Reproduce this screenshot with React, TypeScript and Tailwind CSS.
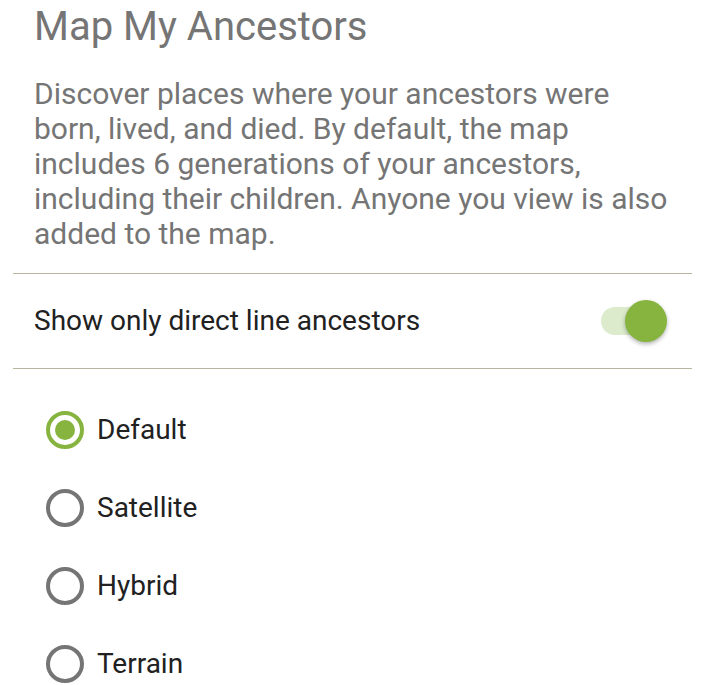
import React from "react";

function Radio({ label, checked }: { label: string; checked?: boolean }) {
  return (
    <div className="flex items-center h-[78px]">
      <div
        className={
          "ml-[46px] w-[38px] h-[38px] rounded-full border-[4px] flex items-center justify-center " +
          (checked ? "border-[#86b43f]" : "border-[#757575]")
        }
      >
        {checked && <div className="w-[20px] h-[20px] rounded-full bg-[#86b43f]" />}
      </div>
      <span className="ml-[13px] text-[28px] text-[#212121]">{label}</span>
    </div>
  );
}

export default function App() {
  return (
    <div
      className="w-[703px] h-[685px] bg-white overflow-hidden"
      style={{ fontFamily: "Roboto, 'Noto Sans', sans-serif" }}
    >
      <div className="px-[34px] pt-[3px]">
        <h1 className="text-[40px] leading-[48px] text-[#757575] font-normal">Map My Ancestors</h1>
        <p className="mt-[25px] text-[30px] leading-[35px] text-[#757575] whitespace-nowrap">
          Discover places where your ancestors were
          <br />
          born, lived, and died. By default, the map
          <br />
          includes 6 generations of your ancestors,
          <br />
          including their children. Anyone you view is also
          <br />
          added to the map.
        </p>
      </div>
      <div className="ml-[13px] mr-[11px] mt-[22px] h-px bg-[#b8b5a2]" />
      <div className="ml-[13px] mr-[11px] h-[94px] flex items-center justify-between">
        <span className="ml-[21px] text-[28px] text-[#212121]">Show only direct line ancestors</span>
        <div className="relative mr-[30px] w-[61px] h-[28px]">
          <div className="absolute inset-0 rounded-full bg-[#dcebcb]" />
          <div className="absolute right-[-5px] top-[-7px] w-[42px] h-[42px] rounded-full bg-[#86b43f] shadow-[0_2px_4px_rgba(0,0,0,0.3)]" />
        </div>
      </div>
      <div className="ml-[13px] mr-[11px] h-px bg-[#b8b5a2]" />
      <div className="pt-[22px]">
        <Radio label="Default" checked />
        <Radio label="Satellite" />
        <Radio label="Hybrid" />
        <Radio label="Terrain" />
      </div>
    </div>
  );
}
